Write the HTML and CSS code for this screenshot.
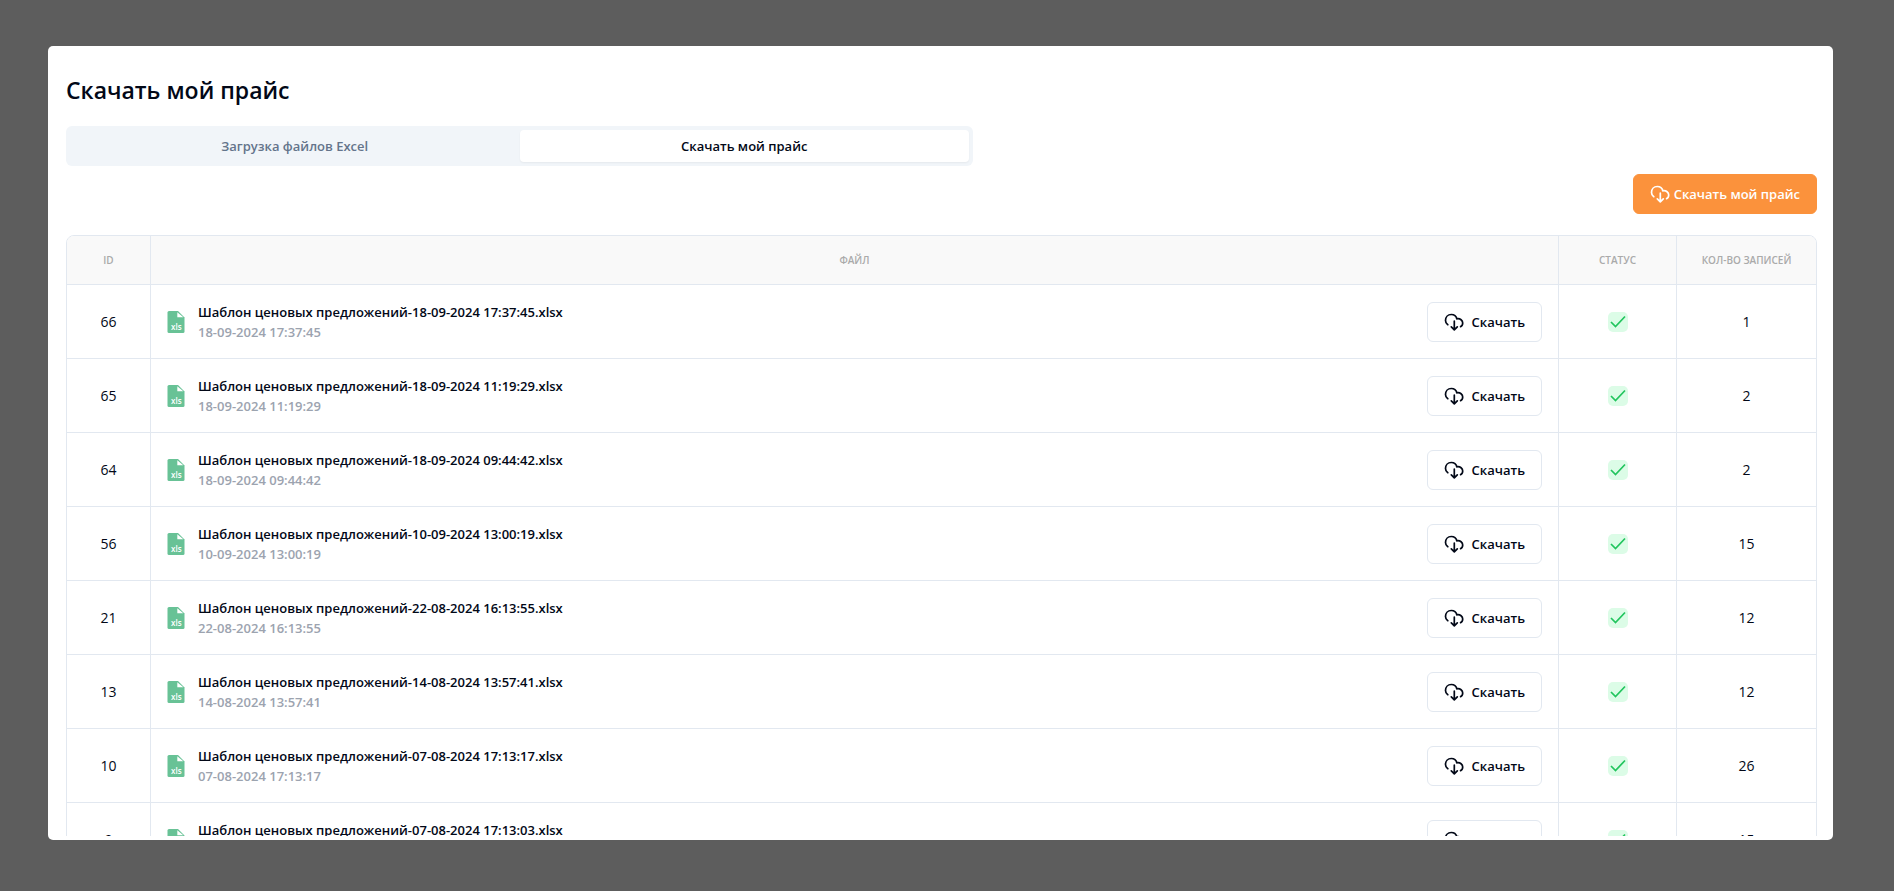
FILE: index.html
```html
<!DOCTYPE html>
<html lang="ru">
<head>
<meta charset="utf-8">
<title>Скачать мой прайс</title>
<link rel="stylesheet" href="styles.css">
</head>
<body>
<svg class="sprite" aria-hidden="true">
  <symbol id="cloud" viewBox="0 0 20 20">
    <path d="M3.800 12.700C2.300 11.700 1.500 10.200 1.500 8.500C1.500 5.200 3.800 2.500 7.300 2.500C10.200 2.500 12.200 4.100 12.800 6.800C16.300 6.200 18.700 8.400 18.700 11.100C18.700 12.800 17.700 14.200 16.600 14.600M10.300 9.200V17.500M7.300 14.800L10.300 17.800L13.300 14.800" fill="none" stroke="currentColor" stroke-width="1.7" stroke-linecap="round" stroke-linejoin="round"/>
  </symbol>
  <symbol id="file" viewBox="0 0 18 22">
    <path d="M2 0H11L17.500 6.500V20.500Q17.500 22 16 22H2Q0.500 22 0.500 20.500V1.500Q0.500 0 2 0Z" fill="#68c296"/>
    <path d="M10.300 1.300V6.300H16.300Z" fill="#fff"/>
    <text x="4" y="19" class="file-ext">xls</text>
  </symbol>
  <symbol id="check" viewBox="0 0 20 20">
    <path d="M3 10L7.500 14.500L17 4.500" fill="none" stroke="currentColor" stroke-width="1.700"/>
  </symbol>
</svg>
<main class="panel">
  <h1 class="title">Скачать мой прайс</h1>
  <div class="tabs" role="tablist">
    <button class="tab" role="tab" aria-selected="false">Загрузка файлов Excel</button>
    <button class="tab tab-active" role="tab" aria-selected="true">Скачать мой прайс</button>
  </div>
  <div class="actions">
    <button class="btn btn-primary"><svg class="icon"><use href="#cloud"/></svg>Скачать мой прайс</button>
  </div>
  <div class="table-wrap">
    <table class="files">
      <thead>
        <tr><th class="col-id">ID</th><th>Файл</th><th class="col-status">Статус</th><th class="col-count">Кол-во записей</th></tr>
      </thead>
      <tbody id="rows"></tbody>
    </table>
  </div>
</main>
<script src="app.js"></script>
</body>
</html>
```
FILE: styles.css
```css
* { box-sizing: border-box; }
body {
  margin: 0;
  height: 100vh;
  padding: 46px 61px 51px 48px;
  background: #5d5d5d;
  color: #020817;
  font-family: "Segoe UI", "Open Sans", "Noto Sans", sans-serif;
  font-size: 14px;
  line-height: 20px;
  overflow: hidden;
}
.sprite { display: block; width: 0; height: 0; }
.panel {
  height: 100%;
  display: flex;
  flex-direction: column;
  padding: 28px 16px 4px 18px;
  background: #fff;
  border-radius: 5px;
}
.title { margin: 0 0 20px; font-size: 23px; line-height: 32px; font-weight: 600; }
.tabs {
  flex: none;
  display: flex;
  width: 51.8%;
  height: 40px;
  padding: 4px;
  background: #f1f5f9;
  border-radius: 6px;
}
.tab {
  flex: 1;
  border: 0;
  border-radius: 4px;
  background: none;
  color: #64748b;
  font: inherit;
  font-size: 13px;
  font-weight: 600;
}
.tab-active { background: #fff; color: #020817; box-shadow: 0 1px 2px rgba(0, 0, 0, 0.05); }
.actions { display: flex; justify-content: flex-end; margin: 8px 0 21px; }
.btn {
  flex: none;
  display: flex;
  align-items: center;
  gap: 8px;
  height: 40px;
  padding: 0 16px;
  border: 1px solid #e2e8f0;
  border-radius: 6px;
  background: #fff;
  color: #020817;
  font: inherit;
  font-size: 13px;
  font-weight: 600;
}
.btn-primary { gap: 4px; border-color: #fb923c; background: #fb923c; color: #fff; }
.icon { flex: none; width: 20px; height: 20px; }
.table-wrap {
  flex: 1;
  min-height: 0;
  overflow: hidden;
}
.files {
  width: 100%;
  table-layout: fixed;
  border: 1px solid #e2e8f0;
  border-radius: 8px;
  border-spacing: 0;
  overflow: hidden;
}
.files th, .files td { padding: 0 16px; text-align: center; border-right: 1px solid #e2e8f0; }
.files th:last-child, .files td:last-child { border-right: 0; }
.files th {
  height: 48px;
  background: #f9f9f9;
  color: #aaa;
  font-size: 10px;
  font-weight: 600;
  text-transform: uppercase;
  white-space: nowrap;
}
.files td { height: 74px; border-top: 1px solid #e2e8f0; }
.col-id { width: 84px; }
.col-status { width: 118px; }
.col-count { width: 139px; }
.file { display: flex; align-items: center; gap: 13px; text-align: left; }
.file-icon { flex: none; width: 18px; height: 22px; }
.file-ext { fill: #fff; font-size: 8px; font-weight: 600; }
.file-info { flex: 1; display: flex; flex-direction: column; font-size: 13px; font-weight: 600; }
.file-date { color: #9ca3af; }
.status { display: block; width: 20px; height: 20px; margin: 0 auto; border-radius: 5px; background: #dcfce7; color: #22c55e; }
```
FILE: app.js
```js
const rows = [
  [66, '18-09-2024 17:37:45', 1],
  [65, '18-09-2024 11:19:29', 2],
  [64, '18-09-2024 09:44:42', 2],
  [56, '10-09-2024 13:00:19', 15],
  [21, '22-08-2024 16:13:55', 12],
  [13, '14-08-2024 13:57:41', 12],
  [10, '07-08-2024 17:13:17', 26],
  [9, '07-08-2024 17:13:03', 15],
];
document.getElementById('rows').innerHTML = rows.map(([id, date, count]) => `
  <tr>
    <td>${id}</td>
    <td><div class="file">
      <svg class="file-icon"><use href="#file"/></svg>
      <div class="file-info"><span>Шаблон ценовых предложений-${date}.xlsx</span><span class="file-date">${date}</span></div>
      <button class="btn"><svg class="icon"><use href="#cloud"/></svg>Скачать</button>
    </div></td>
    <td><svg class="status" role="img" aria-label="Готово"><use href="#check"/></svg></td>
    <td>${count}</td>
  </tr>`).join('');
```
